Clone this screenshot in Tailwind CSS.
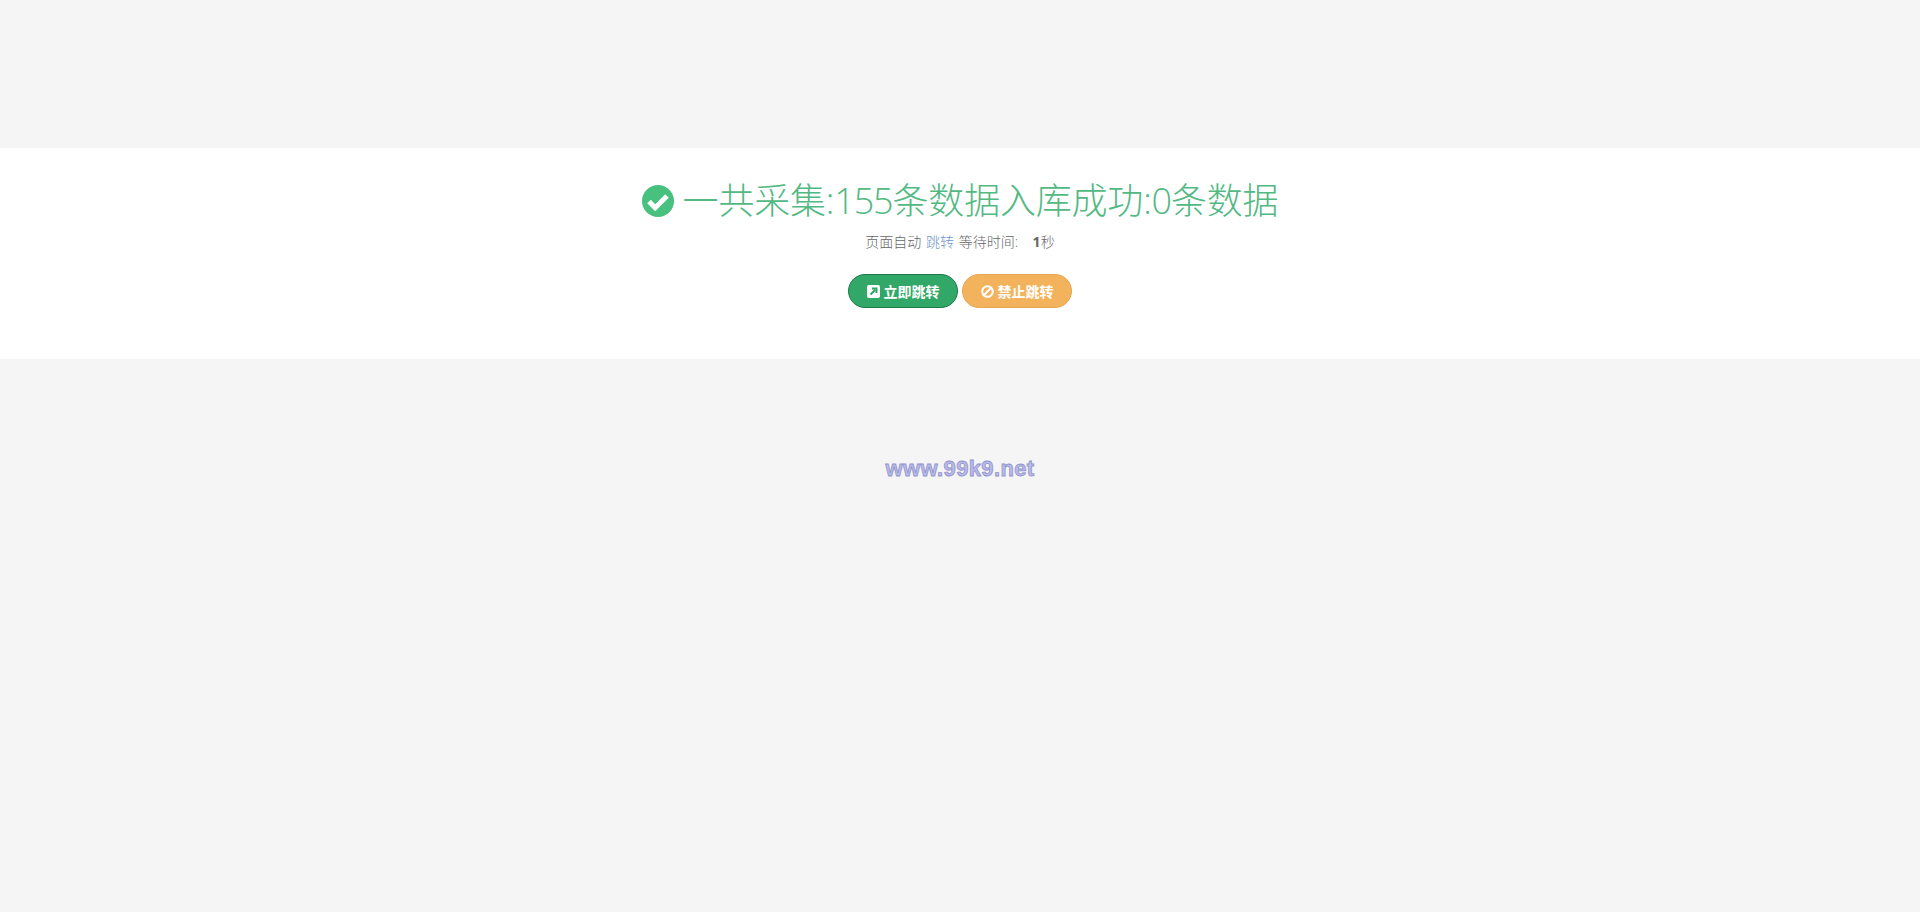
<!DOCTYPE html>
<html lang="zh-CN">
<head>
    <meta charset="UTF-8">
    <title>提示信息</title>
    <script src="https://cdn.jsdelivr.net/npm/@tailwindcss/browser@4"></script>
</head>
<body class="bg-[#f5f5f5] h-screen overflow-hidden font-['Open_Sans','Noto_Sans_CJK_SC',sans-serif]">
    <div class="pt-[148px]">
        <div class="bg-white h-[211px] flex flex-col items-center pt-[30px]">
            <h1 class="flex items-center text-[36px] leading-[46px] font-light text-[#52b983]">
                <svg class="w-[32px] h-[32px] mr-[9px]" viewBox="0 0 32 32">
                    <circle cx="16" cy="16" r="16" fill="#48c07e"/>
                    <path d="M7 16.5l6.2 6.2L25 11" fill="none" stroke="#fff" stroke-width="5"/>
                </svg>
                <span class="tracking-[-0.2px]">一共采集:<span class="tracking-[-1.1px]">155</span>条数据入库成功:<span class="tracking-[-1.1px]">0</span>条数据</span>
            </h1>
            <p class="mt-[8px] text-[14px] leading-[20px] font-light [word-spacing:1px] text-[#666]">
                页面自动 <a href="#" class="text-[#6f94c9]">跳转</a> 等待时间: <b class="ml-[10px] font-bold text-[#666]">1</b>秒
            </p>
            <div class="mt-[22px] flex gap-[4px]">
                <a href="#" class="flex items-center justify-center w-[110px] h-[34px] rounded-[17px] bg-[#31a867] border border-[#1f7a4a] text-white text-[14px] font-bold">
                    <svg class="w-[13px] h-[13px] mr-[4px]" viewBox="0 0 13 13">
                        <rect width="13" height="13" rx="2" fill="#fff"/>
                        <path d="M3.5 9.5L8 5M5 3.5h4.5V8" fill="none" stroke="#31a867" stroke-width="2"/>
                    </svg>
                    立即跳转
                </a>
                <a href="#" class="flex items-center justify-center w-[110px] h-[34px] rounded-[17px] bg-[#f3b35c] border border-[#e8a74f] text-white text-[14px] font-bold">
                    <svg class="w-[13px] h-[13px] mr-[4px]" viewBox="0 0 13 13">
                        <circle cx="6.5" cy="6.5" r="5.3" fill="none" stroke="#fff" stroke-width="2"/>
                        <path d="M3 10L10 3" stroke="#fff" stroke-width="2"/>
                    </svg>
                    禁止跳转
                </a>
            </div>
        </div>
        <div class="mt-[97px] text-center text-[22px] leading-[26px] tracking-[0.35px] font-bold font-['Liberation_Sans',sans-serif] text-[#b9bbe8] [-webkit-text-stroke:0.8px_#9194cc]">www.99k9.net</div>
    </div>
</body>
</html>
